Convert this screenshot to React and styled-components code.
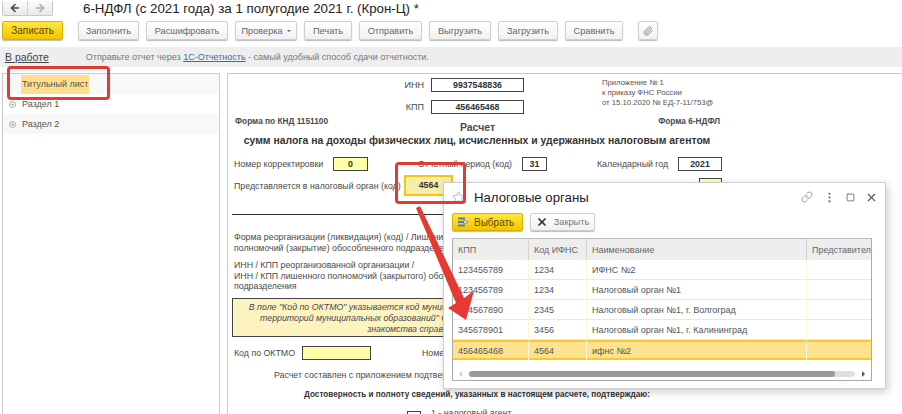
import React from "react";
import styled, { createGlobalStyle } from "styled-components";
import { ArrowLeft, ArrowRight, Paperclip, Link, MoreVertical, Square, X, Star } from "lucide-react";

const GlobalStyle = createGlobalStyle`
  html, body { margin: 0; padding: 0; background: #fff; }
  body { font-family: "Liberation Sans", Arial, sans-serif; color: #4a4a4a; }
`;

const toolbarButtons = [
  { label: "Заполнить", width: 61 },
  { label: "Расшифровать", width: 82 },
  { label: "Проверка", width: 62, caret: true },
  { label: "Печать", width: 48 },
  { label: "Отправить", width: 63 },
  { label: "Выгрузить", width: 62 },
  { label: "Загрузить", width: 60 },
  { label: "Сравнить", width: 58 },
];

const taxOffices = [
  { kpp: "123456789", code: "1234", name: "ИФНС №2" },
  { kpp: "123456789", code: "1234", name: "Налоговый орган №1" },
  { kpp: "234567890", code: "2345", name: "Налоговый орган №1, г. Волгоград" },
  { kpp: "345678901", code: "3456", name: "Налоговый орган №1, г. Калининград" },
  { kpp: "456465468", code: "4564", name: "ифнс №2", selected: true },
];

const App = () => {
  return (
    <Page>
      <GlobalStyle />
      <TitleBar>
        <NavGroup>
          <NavButton><ArrowLeft size={12} strokeWidth={3} color="#444" /></NavButton>
          <NavButton><ArrowRight size={12} strokeWidth={3} color="#aaa" /></NavButton>
        </NavGroup>
        <Title>6-НДФЛ (с 2021 года) за 1 полугодие 2021 г. (Крон-Ц) *</Title>
      </TitleBar>

      <Toolbar>
        <PrimaryButton $width={61}>Записать</PrimaryButton>
        <ToolGroup>
          {toolbarButtons.map((b) => (
            <ToolButton key={b.label} $width={b.width}>
              {b.label}
              {b.caret && <Caret />}
            </ToolButton>
          ))}
        </ToolGroup>
        <ClipButton><Paperclip size={10} color="#777" /></ClipButton>
      </Toolbar>

      <InfoBar>
        <StatusLink>В работе</StatusLink>
        <InfoText>
          Отправьте отчет через <InfoLink>1С-Отчетность</InfoLink> - самый удобный способ сдачи отчетности.
        </InfoText>
      </InfoBar>

      <Content>
        <TreePanel>
          <TreeRow $shaded $top>
            <TreeLabel $active>Титульный лист</TreeLabel>
          </TreeRow>
          <TreeRow>
            <PlusIcon>+</PlusIcon>
            <TreeLabel>Раздел 1</TreeLabel>
          </TreeRow>
          <TreeRow $shaded>
            <PlusIcon>+</PlusIcon>
            <TreeLabel>Раздел 2</TreeLabel>
          </TreeRow>
        </TreePanel>

        <FormPanel>
          <TopBlock>
            <IdLabel>ИНН</IdLabel>
            <ValueBox $width={93} $bold>9937548836</ValueBox>
            <OrderNote>
              Приложение № 1<br />
              к приказу ФНС России<br />
              от 15.10.2020 № ЕД-7-11/753@
            </OrderNote>
            <IdLabel>КПП</IdLabel>
            <ValueBox $width={93} $bold>456465468</ValueBox>
          </TopBlock>

          <HeadRow>
            <FormCode>Форма по КНД 1151100</FormCode>
            <DocTitle>Расчет</DocTitle>
            <FormCode $right>Форма 6-НДФЛ</FormCode>
          </HeadRow>
          <DocHeading>сумм налога на доходы физических лиц, исчисленных и удержанных налоговым агентом</DocHeading>

          <FieldRow $top={10} $columns="99px 35px 50px 104px 25px 50px 70px 11px 44px">
            <FieldLabel>Номер корректировки</FieldLabel>
            <ValueBox $width={35} $yellow $bold>0</ValueBox>
            <span />
            <FieldLabel>Отчетный период (код)</FieldLabel>
            <ValueBox $width={25} $bold>31</ValueBox>
            <span />
            <FieldLabel>Календарный год</FieldLabel>
            <span />
            <ValueBox $width={44} $bold>2021</ValueBox>
          </FieldRow>

          <AuthorityRow>
            <FieldLabel>Представляется в налоговый орган (код)</FieldLabel>
            <ActiveBox>4564</ActiveBox>
            <SmallBox />
          </AuthorityRow>

          <Divider />

          <TextBlock $top={17}>
            Форма реорганизации (ликвидация) (код) / Лишение<br />
            полномочий (закрытие) обособленного подразделения
          </TextBlock>
          <TextBlock $top={7}>
            ИНН / КПП реорганизованной организации /<br />
            ИНН / КПП лишенного полномочий (закрытого) обособленного<br />
            подразделения
          </TextBlock>

          <NoteBox>
            В поле "Код по ОКТМО" указывается код муниципального образования, на территории которого находится<br />
            территорий муниципальных образований" ОК 033-2013 (ОКТМО). Для выбора значения и ознакомления<br />
            знакомства справочника кодов ОКТМО территорий
          </NoteBox>

          <OktmoRow>
            <FieldLabel>Код по ОКТМО</FieldLabel>
            <ValueBox $width={69} $yellow />
            <FieldLabel>Номер</FieldLabel>
          </OktmoRow>
          <AttachLine>Расчет составлен с приложением подтверждающих документов</AttachLine>
          <ConfirmLine>Достоверность и полноту сведений, указанных в настоящем расчете, подтверждаю:</ConfirmLine>
          <AgentRow>
            <ValueBox $width={14} />
            <AgentLabel>1 - налоговый агент</AgentLabel>
          </AgentRow>
        </FormPanel>
      </Content>

      <Modal>
        <ModalHead>
          <Star size={13} color="#c4c4c4" />
          <ModalTitle>Налоговые органы</ModalTitle>
          <ModalIcons>
            <Link size={12} color="#999" />
            <MoreVertical size={13} color="#666" />
            <Square size={9} color="#555" />
            <X size={13} color="#555" />
          </ModalIcons>
        </ModalHead>
        <ModalToolbar>
          <SelectButton>
            <svg width="12" height="12" viewBox="0 0 12 12">
              <rect x="1" y="1.5" width="7" height="2" fill="#5b7fa8" />
              <rect x="1" y="5" width="9" height="2" fill="#5b7fa8" />
              <rect x="1" y="8.5" width="7" height="2" fill="#5b7fa8" />
              <path d="M7 4l4 2-4 2z" fill="#fff" stroke="#44658c" strokeWidth="0.6" />
            </svg>
            Выбрать
          </SelectButton>
          <CloseButton>
            <X size={12} strokeWidth={3.5} color="#333" />
            Закрыть
          </CloseButton>
        </ModalToolbar>
        <Table>
          <TableHeader>
            <HeaderCell>КПП</HeaderCell>
            <HeaderCell>Код ИФНС</HeaderCell>
            <HeaderCell>Наименование</HeaderCell>
            <HeaderCell>Представитель</HeaderCell>
          </TableHeader>
          {taxOffices.map((row) => (
            <TableRow key={row.kpp + row.name} $selected={row.selected}>
              <Cell $selected={row.selected}>{row.kpp}</Cell>
              <Cell $selected={row.selected}>{row.code}</Cell>
              <Cell $selected={row.selected}>{row.name}</Cell>
              <Cell $selected={row.selected} />
            </TableRow>
          ))}
          <ScrollBar>
            <ScrollArrow $left />
            <ScrollTrack>
              <ScrollThumb />
            </ScrollTrack>
            <ScrollArrow />
          </ScrollBar>
        </Table>
      </Modal>

      <RedFrame $left={7} $top={66} $width={103} $height={34} />
      <RedFrame $left={395} $top={162} $width={71} $height={42} />
      <ArrowOverlay width="902" height="414" viewBox="0 0 902 414">
        <path d="M416 208L420 206L464 298L474 291L466 320L448 308L456 303Z" fill="#e53a33" />
      </ArrowOverlay>
    </Page>
  );
};

export default App;

const Page = styled.div`
  position: relative;
  width: 902px;
  height: 414px;
  overflow: hidden;
  background: #fff;
`;

const TitleBar = styled.div`
  display: flex;
  align-items: center;
  height: 16px;
  padding-left: 2px;
`;

const NavGroup = styled.div`
  display: flex;
  width: 51px;
  height: 15px;
  border: 1px solid #c8c8c8;
  border-top: none;
  border-radius: 0 0 2px 2px;
  box-sizing: border-box;
  background: linear-gradient(#fbfbfb, #e9e9e9);
`;

const NavButton = styled.div`
  flex: 1;
  display: flex;
  align-items: center;
  justify-content: center;
  & + & { border-left: 1px solid #d0d0d0; }
`;

const Title = styled.div`
  margin-left: 30px;
  font-size: 13.3px;
  color: #222;
  white-space: nowrap;
`;

const Toolbar = styled.div`
  display: flex;
  align-items: center;
  height: 19px;
  margin-top: 5px;
  padding-left: 2px;
`;

const ButtonBase = styled.div`
  box-sizing: border-box;
  display: flex;
  align-items: center;
  justify-content: center;
  height: 19px;
  font-size: 9.2px;
  white-space: nowrap;
  border-radius: 2px;
`;

const PrimaryButton = styled(ButtonBase)`
  width: ${(p) => p.$width}px;
  font-size: 10px;
  color: #5a4300;
  background: linear-gradient(#ffe83c, #f2c500);
  border: 1px solid #d8b100;
  box-shadow: 0 1px 1px #bbb;
`;

const ToolGroup = styled.div`
  display: flex;
  gap: 7px;
  margin-left: 15px;
`;

const ToolButton = styled(ButtonBase)`
  width: ${(p) => p.$width}px;
  color: #666;
  background: linear-gradient(#fff, #f1f1f1);
  border: 1px solid #cfcfcf;
  box-shadow: 0 1px 1px #bbb;
`;

const Caret = styled.span`
  width: 0;
  height: 0;
  margin-left: 4px;
  border-left: 2px solid transparent;
  border-right: 2px solid transparent;
  border-top: 2px solid #666;
`;

const ClipButton = styled(ToolButton)`
  width: 20px;
  margin-left: 15px;
`;

const InfoBar = styled.div`
  display: flex;
  align-items: center;
  height: 20px;
  margin-top: 7px;
  padding-left: 5px;
  background: #eeeeee;
`;

const StatusLink = styled.span`
  font-size: 10.5px;
  color: #444;
  text-decoration: underline;
`;

const InfoText = styled.span`
  margin-left: 37px;
  font-size: 9px;
  color: #777;
  white-space: nowrap;
`;

const InfoLink = styled.span`
  color: #3a6ea8;
  text-decoration: underline;
`;

const Content = styled.div`
  display: flex;
  gap: 7px;
  height: 341px;
  margin-top: 6px;
  padding-left: 2px;
`;

const TreePanel = styled.div`
  box-sizing: border-box;
  width: 218px;
  border: 1px solid #c9c9c9;
  border-bottom: none;
`;

const TreeRow = styled.div`
  display: flex;
  align-items: center;
  height: 20px;
  padding-left: ${(p) => (p.$top ? "18px" : "6px")};
  background: ${(p) => (p.$shaded ? "#f8f8f8" : "#fff")};
`;

const PlusIcon = styled.span`
  box-sizing: border-box;
  display: flex;
  align-items: center;
  justify-content: center;
  width: 7px;
  height: 7px;
  margin-right: 5px;
  font-size: 7px;
  line-height: 1;
  color: #888;
  border: 1px solid #aaa;
  border-radius: 50%;
`;

const TreeLabel = styled.span`
  padding: 0 1px;
  font-size: 9px;
  line-height: 19px;
  color: #555;
  background: ${(p) => (p.$active ? "#ffdf8c" : "transparent")};
`;

const FormPanel = styled.div`
  box-sizing: border-box;
  flex: 1;
  padding: 4px 0 0 4px;
  overflow: hidden;
  border-top: 1px solid #c9c9c9;
  border-left: 1px solid #c9c9c9;
`;

const TopBlock = styled.div`
  display: grid;
  grid-template-columns: 192px 93px auto;
  grid-template-rows: 14px 14px;
  column-gap: 7px;
  row-gap: 8px;
  width: 490px;
`;

const IdLabel = styled.div`
  font-size: 9px;
  line-height: 14px;
  text-align: right;
`;

const ValueBox = styled.div`
  box-sizing: border-box;
  width: ${(p) => p.$width}px;
  height: 14px;
  font-size: 8.8px;
  font-weight: ${(p) => (p.$bold ? 700 : 400)};
  line-height: 12px;
  text-align: center;
  color: #333;
  background: ${(p) => (p.$yellow ? "#ffffa8" : "#fff")};
  border: 1px solid #444;
`;

const OrderNote = styled.div`
  grid-row: span 2;
  margin-left: 71px;
  font-size: 7.7px;
  line-height: 10px;
  white-space: nowrap;
  color: #555;
`;

const HeadRow = styled.div`
  display: grid;
  grid-template-columns: 1fr auto 1fr;
  width: 485px;
  height: 18px;
  margin: 1px 0 0 3px;
`;

const FormCode = styled.div`
  align-self: start;
  padding-top: 1px;
  font-size: 8.3px;
  font-weight: 700;
  line-height: 11px;
  text-align: ${(p) => (p.$right ? "right" : "left")};
`;

const DocTitle = styled.div`
  align-self: end;
  font-size: 10.5px;
  font-weight: 700;
  line-height: 12px;
`;

const DocHeading = styled.div`
  width: 490px;
  margin-top: 2px;
  font-size: 10.4px;
  font-weight: 700;
  line-height: 12px;
  text-align: center;
  white-space: nowrap;
  color: #333;
`;

const FieldRow = styled.div`
  display: grid;
  grid-template-columns: ${(p) => p.$columns};
  align-items: center;
  height: 14px;
  margin: ${(p) => p.$top}px 0 0 2px;
`;

const FieldLabel = styled.div`
  font-size: 8.8px;
  line-height: 14px;
  white-space: nowrap;
`;

const AgentLabel = styled(FieldLabel)`
  margin-top: -5px;
`;

const AuthorityRow = styled.div`
  display: grid;
  grid-template-columns: 171px 47px 247px 23px;
  align-items: center;
  height: 19px;
  margin: 5px 0 0 2px;
`;

const ActiveBox = styled.div`
  box-sizing: border-box;
  width: 47px;
  height: 19px;
  font-size: 8.8px;
  font-weight: 700;
  line-height: 17px;
  text-align: center;
  color: #333;
  background: #f5eeaa;
  border: 1px solid #555;
  outline: 2px solid #f5c518;
  outline-offset: -1px;
`;

const SmallBox = styled.div`
  box-sizing: border-box;
  grid-column: 4;
  align-self: start;
  height: 14px;
  margin-top: 2px;
  background: #ffffa8;
  border: 1px solid #444;
`;

const Divider = styled.div`
  width: 490px;
  height: 1px;
  margin-top: 19px;
  background: #333;
`;

const TextBlock = styled.div`
  width: 330px;
  margin: ${(p) => p.$top}px 0 0 2px;
  font-size: 8.8px;
  line-height: 10.5px;
  white-space: nowrap;
`;

const NoteBox = styled.div`
  box-sizing: border-box;
  width: 490px;
  height: 39px;
  margin-top: 6.5px;
  padding-top: 3px;
  font-size: 8.8px;
  font-style: italic;
  line-height: 11px;
  text-align: center;
  white-space: nowrap;
  overflow: hidden;
  background: #fdf3c0;
  border: 1px solid #444;
`;

const OktmoRow = styled.div`
  display: grid;
  grid-template-columns: 68px 120px auto;
  align-items: center;
  height: 14px;
  margin: 8.5px 0 0 2px;
`;

const AttachLine = styled.div`
  margin: 9px 0 0 42px;
  font-size: 8.8px;
  line-height: 12px;
  white-space: nowrap;
`;

const ConfirmLine = styled.div`
  width: 490px;
  margin-top: 8px;
  font-size: 8.2px;
  font-weight: 700;
  line-height: 12px;
  text-align: center;
  white-space: nowrap;
  color: #333;
`;

const AgentRow = styled.div`
  display: flex;
  gap: 10px;
  margin: 10px 0 0 175px;
`;

const Modal = styled.div`
  position: absolute;
  left: 443px;
  top: 182px;
  box-sizing: border-box;
  width: 443px;
  height: 207px;
  padding: 0 13px 0 8px;
  background: #fff;
  border: 1px solid #cfcfcf;
  box-shadow: 2px 3px 8px rgba(0, 0, 0, 0.2);
`;

const ModalHead = styled.div`
  box-sizing: border-box;
  display: flex;
  align-items: center;
  height: 30px;
  padding-bottom: 2px;
`;

const ModalTitle = styled.div`
  margin-left: 9px;
  font-size: 13.2px;
  color: #222;
`;

const ModalIcons = styled.div`
  display: flex;
  align-items: center;
  gap: 10px;
  margin-left: auto;
  margin-right: -6px;
`;

const ModalToolbar = styled.div`
  display: flex;
  gap: 7px;
`;

const SelectButton = styled(ButtonBase)`
  justify-content: flex-start;
  gap: 5px;
  width: 71px;
  height: 18px;
  padding-left: 4px;
  font-size: 10px;
  color: #5a4300;
  background: linear-gradient(#ffe83c, #f2c500);
  border: 1px solid #d8b100;
  box-shadow: 0 1px 1px #bbb;
`;

const CloseButton = styled(ButtonBase)`
  gap: 6px;
  width: 65px;
  height: 18px;
  color: #777;
  background: linear-gradient(#fff, #f1f1f1);
  border: 1px solid #cfcfcf;
  box-shadow: 0 1px 1px #bbb;
`;

const Table = styled.div`
  box-sizing: border-box;
  width: 420px;
  height: 143px;
  margin-top: 7px;
  overflow: hidden;
  border: 1px solid #aaa;
  border-top-color: #bbb;
`;

const gridColumns = "75px 58px 220px 1fr";

const TableHeader = styled.div`
  display: grid;
  grid-template-columns: ${gridColumns};
  height: 21px;
  background: #eeeeee;
`;

const HeaderCell = styled.div`
  padding-left: 5px;
  font-size: 9px;
  line-height: 22px;
  white-space: nowrap;
  overflow: hidden;
  color: #666;
  & + & { border-left: 1px solid #d2d2d2; }
`;

const TableRow = styled.div`
  box-sizing: border-box;
  display: grid;
  grid-template-columns: ${gridColumns};
  height: 20px;
  background: ${(p) => (p.$selected ? "#ffe28f" : "#fff")};
  border-bottom: ${(p) => (p.$selected ? "2px solid #fbc92a" : "1px solid #e8e8e8")};
  border-top: ${(p) => (p.$selected ? "2px solid #fbc92a" : "none")};
`;

const Cell = styled.div`
  padding-left: 5px;
  font-size: 9px;
  line-height: ${(p) => (p.$selected ? "18px" : "21px")};
  white-space: nowrap;
  color: #555;
  & + & { border-left: 1px solid ${(p) => (p.$selected ? "#fff6d8" : "transparent")}; }
`;

const ScrollBar = styled.div`
  display: flex;
  align-items: center;
  gap: 7px;
  height: 6px;
  margin-top: 11px;
  padding: 0 6px;
`;

const ScrollArrow = styled.div`
  width: 0;
  height: 0;
  border-top: 3px solid transparent;
  border-bottom: 3px solid transparent;
  ${(p) => (p.$left ? "border-right: 3px solid #ccc;" : "border-left: 3px solid #555;")}
`;

const ScrollTrack = styled.div`
  flex: 1;
  height: 6px;
  border-radius: 3px;
  background: #dfdfdf;
`;

const ScrollThumb = styled.div`
  width: 366px;
  height: 6px;
  border-radius: 3px;
  background: #9c9c9c;
`;

const RedFrame = styled.div`
  position: absolute;
  left: ${(p) => p.$left}px;
  top: ${(p) => p.$top}px;
  box-sizing: border-box;
  width: ${(p) => p.$width}px;
  height: ${(p) => p.$height}px;
  border: 3px solid #e53a33;
  border-radius: 4px;
`;

const ArrowOverlay = styled.svg`
  position: absolute;
  left: 0;
  top: 0;
  pointer-events: none;
`;
